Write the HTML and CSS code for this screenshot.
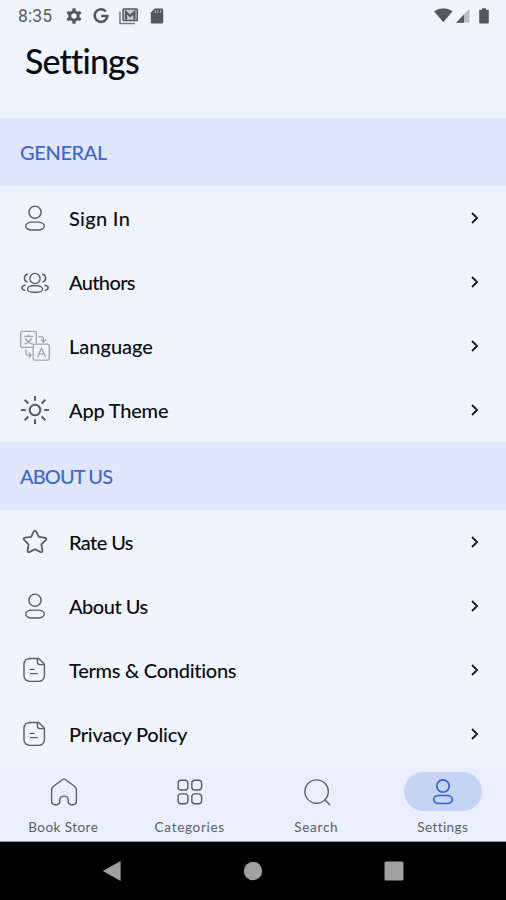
FILE: index.html
```html
<!DOCTYPE html>
<html lang="en">
<head>
<meta charset="utf-8">
<title>Settings</title>
<link rel="stylesheet" href="styles.css">
</head>
<body>
<svg width="0" height="0" class="defs">
  <symbol id="person" viewBox="0 0 30 30"><circle cx="15" cy="9.2" r="6.1"/><rect x="5.7" y="19.1" width="18.6" height="7.9" rx="6" ry="3.95"/></symbol>
  <symbol id="doc" viewBox="0 0 30 30"><path d="M10 3.5h8.8l5.6 5.8v11.4a5.7 5.7 0 0 1-5.7 5.7H9.7A5.7 5.7 0 0 1 4 20.7V9.2a5.7 5.7 0 0 1 6-5.7zM17.4 3.6v2.8a3.2 3.2 0 0 0 3.2 3.2h3.6M10.3 14.4h3.8M10.3 18.6h7"/></symbol>
  <symbol id="chev" viewBox="0 0 12 14"><path d="M3 2l5 5-5 5"/></symbol>
</svg>
<div class="screen">
  <header class="status">
    <div class="left">
      <span class="time">8:35</span>
      <svg class="gear" width="16" height="16" viewBox="0 0 16 16"><circle cx="8" cy="8" r="4.2" fill="none" stroke="#55575e" stroke-width="3"/><path d="M8 .3v3M8 12.7v3M1.3 4.1l2.6 1.5M12.1 10.4l2.6 1.5M1.3 11.9l2.6-1.5M12.1 5.6l2.6-1.5" stroke="#55575e" stroke-width="3.2"/></svg>
      <svg class="goog" width="16" height="16" viewBox="0 0 16 16"><path d="M12.8 3.5A6.3 6.3 0 1 0 14.3 8H8.2" fill="none" stroke="#55575e" stroke-width="2.6"/></svg>
      <svg class="mail" width="19" height="17" viewBox="0 0 19 17"><path d="M1 3.5v12h15" fill="none" stroke="#777981" stroke-width="1.5"/><rect x="4" y="1" width="14.3" height="11.6" rx="1" fill="#c7cbd8" stroke="#55575e" stroke-width="1.5"/><path d="M7 11.5V4l4.2 4 4.2-4v7.5" fill="none" stroke="#55575e" stroke-width="2.2"/></svg>
      <svg class="sd" width="14" height="16" viewBox="0 0 14 16"><path d="M4.7.5h7.2q1.3 0 1.3 1.3v12.4q0 1.3-1.3 1.3H2.1q-1.3 0-1.3-1.3V4.6z" fill="#55575e"/><path d="M5.4 2v3M8 2v3M10.6 2v3" stroke="#a7abb6" stroke-width="1.1"/></svg>
    </div>
    <svg class="signals" width="56" height="16" viewBox="0 0 56 16"><path d="M0 3.3Q9.3-2.8 18.6 3.3L9.3 14.2z" fill="#55575e"/><path d="M35.5.7v14H22z" fill="#b9bdc9"/><path d="M30 6.6v8.1h-8z" fill="#55575e"/><path d="M48 1.8V.2h4v1.6h2q.8 0 .8.8v12q0 .8-.8.8h-8q-.8 0-.8-.8v-12q0-.8.8-.8z" fill="#55575e"/></svg>
  </header>
  <h1>Settings</h1>
  <h2 class="t-general">GENERAL</h2>
  <ul>
    <li><svg class="ico"><use href="#person"/></svg><span class="label t-sign">Sign In</span><svg class="chev"><use href="#chev"/></svg></li>
    <li><svg class="ico" viewBox="0 0 30 30"><circle cx="15" cy="11.5" r="5.1"/><rect x="7.5" y="18.8" width="15" height="6.4" rx="5" ry="3.2"/><path d="M7.4 7.3c-4 .8-4 6.4-.3 7.5M22.6 7.3c4 .8 4 6.4.3 7.5M5 18.3c-4.2.8-4.2 4.3-.4 5M25 18.3c4.2.8 4.2 4.3.4 5"/></svg><span class="label t-auth">Authors</span><svg class="chev"><use href="#chev"/></svg></li>
    <li><svg class="ico lang" viewBox="0 0 30 30"><path d="M13 16.4H2.2q-1.5 0-1.5-1.5V1.9Q.7.4 2.2.4h12.6q1.5 0 1.5 1.5V12M14.7 13.2h12.9q1.7 0 1.7 1.7v12.6q0 1.7-1.7 1.7H14.9q-1.7 0-1.7-1.7V14.9q0-1.7 1.5-1.7zM18.5 5.8h3.2q1.7 0 1.7 1.7v3.2M21.3 9l2.1 2 2.1-2M6 19v3.4q0 1.7 1.7 1.7h3.2M9 22l2.1 2.1L9 26.2M4.3 5.4h8.4M8.5 4v1.4M5.6 7.8q2 3.9 6.5 5.1M11.4 7.8q-2 3.9-6.5 5.1M17.6 25.7l3.9-8.7 3.9 8.7M19 22.9h5"/></svg><span class="label t-lang">Language</span><svg class="chev"><use href="#chev"/></svg></li>
    <li><svg class="ico sun" viewBox="0 0 30 30"><circle cx="15" cy="15" r="5.3"/><path d="M15 1v4.8M15 24.2V29M1 15h4.8M24.2 15H29M4.7 4.7l3.7 3.7M21.6 21.6l3.7 3.7M4.7 25.3l3.7-3.7M21.6 8.4l3.7-3.7"/></svg><span class="label t-theme">App Theme</span><svg class="chev"><use href="#chev"/></svg></li>
  </ul>
  <h2 class="t-aboutus">ABOUT US</h2>
  <ul>
    <li><svg class="ico star" viewBox="0 0 30 30"><path d="M13.6 4.8q1.4-2.4 2.8 0l2.5 5 5.8.8q2.8.6.9 2.6l-4.2 4.1 1 6q.2 2.7-2.3 1.6L15 22.2l-5.1 2.7q-2.5 1.1-2.3-1.6l1-6-4.2-4.1q-1.9-2 .9-2.6l5.8-.8z"/></svg><span class="label t-rate">Rate Us</span><svg class="chev"><use href="#chev"/></svg></li>
    <li><svg class="ico"><use href="#person"/></svg><span class="label t-about">About Us</span><svg class="chev"><use href="#chev"/></svg></li>
    <li><svg class="ico"><use href="#doc"/></svg><span class="label t-terms">Terms &amp; Conditions</span><svg class="chev"><use href="#chev"/></svg></li>
    <li><svg class="ico"><use href="#doc"/></svg><span class="label t-priv">Privacy Policy</span><svg class="chev"><use href="#chev"/></svg></li>
  </ul>
  <nav>
    <a><i><svg class="ico" viewBox="0 0 30 30"><path d="M15 2.1Q16 2.1 17 3l9 6.7q1.4 1.2 1.4 3v11.4q0 3.6-3.6 3.6h-1q-3.7 0-3.7-3.7v-1.3q0-3.6-4.1-3.6t-4.1 3.6V24q0 3.7-3.7 3.7h-1q-3.6 0-3.6-3.6V12.7q0-1.8 1.4-3L13 3q1-.9 2-.9z"/></svg></i><span class="t-book">Book Store</span></a>
    <a><i><svg class="ico" viewBox="0 0 30 30"><rect x="3.1" y="3.2" width="9.8" height="9.8" rx="3"/><rect x="16.8" y="3.2" width="9.8" height="9.8" rx="3"/><rect x="3.1" y="16.9" width="9.8" height="9.8" rx="3"/><rect x="16.8" y="16.9" width="9.8" height="9.8" rx="3"/></svg></i><span class="t-cat">Categories</span></a>
    <a><i><svg class="ico" viewBox="0 0 30 30"><circle cx="14.6" cy="14.6" r="11.7"/><path d="M23 23.1l4.5 4.5"/></svg></i><span class="t-search">Search</span></a>
    <a class="on"><i><svg class="ico" viewBox="0 0 30 30"><circle cx="15" cy="9" r="6.2"/><rect x="5.7" y="18.5" width="18.6" height="8" rx="5" ry="4"/></svg></i><span class="t-set">Settings</span></a>
  </nav>
  <footer>
    <svg width="20" height="22" viewBox="0 0 20 22"><path d="M18.6 1v20L.8 11z"/></svg>
    <svg width="20" height="22" viewBox="0 0 20 22"><circle cx="10" cy="11" r="9.2"/></svg>
    <svg width="20" height="22" viewBox="0 0 20 22"><rect x=".5" y="1.5" width="19" height="19" rx="1.5"/></svg>
  </footer>
</div>
</body>
</html>
```
FILE: styles.css
```css
* { box-sizing: border-box; margin: 0; padding: 0; }
body { background: #f0f4ff; font-family: Lato, "Liberation Sans", sans-serif; color: #0b0c10; }
.defs { display: block; position: absolute; }
.screen { width: 506px; height: 900px; display: flex; flex-direction: column; overflow: hidden; }
.status { height: 32px; display: flex; justify-content: space-between; padding: 0 16px 0 18px; align-items: center; }
.left { display: flex; align-items: center; }
.time { font: 17.5px/32px Roboto, sans-serif; color: #5c5e66; width: 48px; letter-spacing: .15px; }
.goog { margin-left: 11px; }
.mail { margin-left: 10px; }
.sd { margin-left: 12px; }
h1 { height: 86px; padding-left: 25px; font-size: 34px; line-height: 58px; font-weight: 500; letter-spacing: -.85px; white-space: nowrap; }
h2 { height: 68px; background: #e0e6fc; color: #4068cc; font-size: 20px; line-height: 68px; font-weight: 500; padding-left: 20px; white-space: nowrap; }
ul { list-style: none; }
li { height: 64px; display: flex; align-items: center; padding-left: 20px; padding-right: 25px; font-size: 20px; }
.label { margin-left: 19px; flex: 1; line-height: 24px; padding-bottom: 1px; white-space: nowrap; font-weight: 500; }
.t-general { letter-spacing: -.35px; }
.t-aboutus { letter-spacing: -.9px; }
.t-sign { letter-spacing: .3px; }
.t-auth { letter-spacing: -.65px; }
.t-theme { letter-spacing: -.2px; }
.t-rate { letter-spacing: -.6px; }
.t-about { letter-spacing: -.5px; }
.t-terms { letter-spacing: -.27px; }
.t-priv { letter-spacing: -.22px; }
.ico { width: 30px; height: 30px; fill: none; stroke: #5b5d64; stroke-width: 1.4; stroke-linecap: round; stroke-linejoin: round; display: block; overflow: visible; }
.lang { stroke: #a0a3ab; stroke-width: 1.3; }
.sun { stroke-width: 2.1; stroke-linecap: butt; }
.star { stroke-width: 1.8; }
.chev { width: 12px; height: 14px; fill: none; stroke: #25272c; stroke-width: 2; }
nav { height: 74px; margin-top: 2px; background: #eaeefd; border-bottom: 1px solid #9698a0; display: grid; grid-template-columns: repeat(4, 1fr); }
nav a { display: flex; flex-direction: column; align-items: center; padding-top: 4px; font-size: 13.5px; color: #5c5f68; white-space: nowrap; }
nav i { width: 78px; height: 39px; border-radius: 20px; display: flex; align-items: center; justify-content: center; margin-bottom: 8px; padding-left: 1px; }
nav span { line-height: 16px; }
.t-book { letter-spacing: .45px; }
.t-cat { letter-spacing: .7px; }
.t-search { letter-spacing: .75px; }
.t-set { letter-spacing: .4px; }
.on i { background: #c6d4f4; }
.on .ico { stroke: #3462d4; stroke-width: 1.7; }
footer { height: 58px; background: #000; display: flex; align-items: center; padding-left: 102px; gap: 121px; fill: #a0a0a0; }
```
